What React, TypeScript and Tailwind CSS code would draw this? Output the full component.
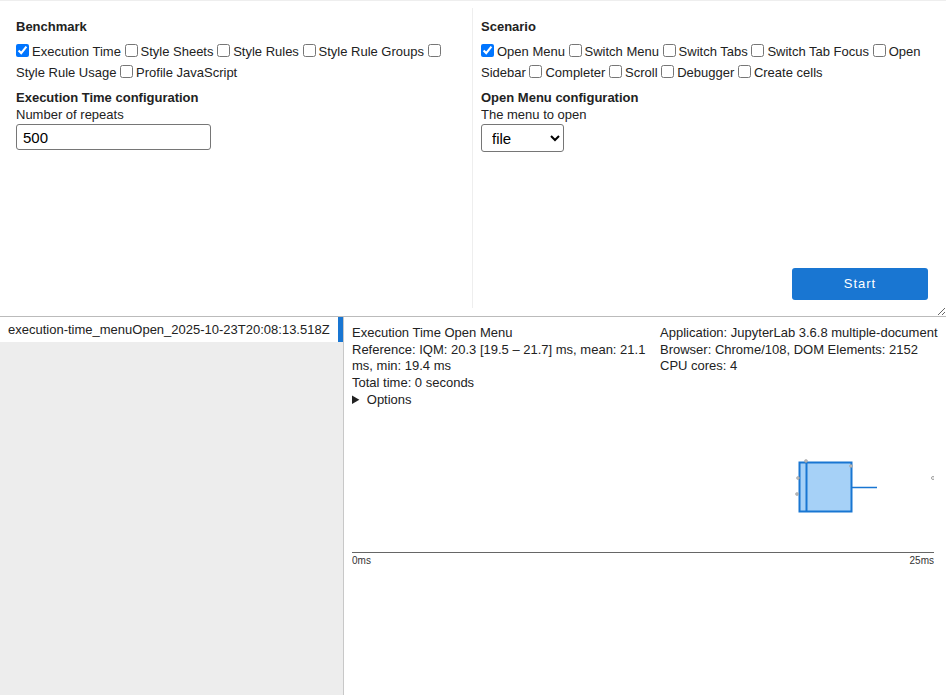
import { useState } from 'react';

const benchmarks = ['Execution Time', 'Style Sheets', 'Style Rules', 'Style Rule Groups', 'Style Rule Usage', 'Profile JavaScript'];
const scenarios = ['Open Menu', 'Switch Menu', 'Switch Tabs', 'Switch Tab Focus', 'Open Sidebar', 'Completer', 'Scroll', 'Debugger', 'Create cells'];

function CheckList({ items, checked }: { items: string[]; checked: string }) {
  return (
    <div className="leading-[21px]">
      {items.map((item) => (
        <span key={item}>
          <label>
            <input type="checkbox" defaultChecked={item === checked} className="m-0 mr-[3px] w-[13px] h-[13px] align-[-1px]" />
            {item}
          </label>{' '}
        </span>
      ))}
    </div>
  );
}

function BoxPlot() {
  return (
    <svg width="582" height="161" className="block">
      <rect x="447.5" y="53.5" width="52" height="49" fill="#a6d1f7" stroke="#1976d2" strokeWidth="2" />
      <line x1="454.5" y1="53" x2="454.5" y2="103" stroke="#1976d2" strokeWidth="2" />
      <line x1="500" y1="78.5" x2="525" y2="78.5" stroke="#1976d2" strokeWidth="1.5" />
      {[
        [454, 52],
        [499, 57],
        [446, 69],
        [445, 85],
      ].map(([x, y]) => (
        <circle key={`${x}-${y}`} cx={x} cy={y} r="1.5" fill="#bbb" stroke="#999" strokeWidth="0.5" />
      ))}
      <circle cx="581" cy="69" r="1.5" fill="none" stroke="#888" strokeWidth="0.8" />
      <line x1="0" y1="143.5" x2="582" y2="143.5" stroke="#666" strokeWidth="1" />
      <text x="0" y="155" fontSize="10" fill="#333" fontFamily="Liberation Sans, Arial, sans-serif">0ms</text>
      <text x="582" y="155" fontSize="10" fill="#333" textAnchor="end" fontFamily="Liberation Sans, Arial, sans-serif">25ms</text>
    </svg>
  );
}

export default function App() {
  const [repeats, setRepeats] = useState('500');

  return (
    <div className="w-[946px] h-[695px] bg-white text-[#222] text-[13px] font-['Liberation_Sans',Arial,sans-serif] flex flex-col overflow-hidden">
      {/* top configuration area */}
      <div className="h-[317px] shrink-0 border-t border-[#eee] border-b border-b-[#bbb] flex p-[8px] pt-[7px] resize-y overflow-hidden">
        <div className="w-[465px] border-r border-[#eee] px-[8px] pt-[8px]">
          <h3 className="font-bold leading-[21px] mb-[4px]">Benchmark</h3>
          <CheckList items={benchmarks} checked="Execution Time" />
          <h3 className="font-bold leading-[16px] mt-[7px]">Execution Time configuration</h3>
          <div className="leading-[16px] mt-[1px]">Number of repeats</div>
          <input
            value={repeats}
            onChange={(e) => setRepeats(e.target.value)}
            className="mt-[1px] w-[195px] h-[26px] border border-[#767676] rounded-[3px] px-[6px] text-[15px] text-black outline-none"
          />
        </div>
        <div className="flex-1 px-[8px] pt-[8px] pb-[8px] flex flex-col">
          <h3 className="font-bold leading-[21px] mb-[4px]">Scenario</h3>
          <CheckList items={scenarios} checked="Open Menu" />
          <h3 className="font-bold leading-[16px] mt-[7px]">Open Menu configuration</h3>
          <div className="leading-[16px] mt-[1px]">The menu to open</div>
          <select defaultValue="file" className="mt-[1px] w-[83px] h-[28px] border border-[#767676] rounded-[3px] pl-[6px] text-[15px] text-black bg-white">
            <option value="file">file</option>
            <option value="edit">edit</option>
            <option value="view">view</option>
          </select>
          <div className="flex-1" />
          <div className="flex justify-end pr-[2px]">
            <button className="w-[136px] h-[32px] bg-[#1976d2] text-white rounded-[3px] tracking-[1px] text-[13px] font-medium">
              Start
            </button>
          </div>
        </div>
      </div>

      {/* results area */}
      <div className="flex flex-1 min-h-0">
        <div className="w-[344px] shrink-0 bg-[#ededed] border-r border-[#c8c8c8]">
          <div className="h-[25px] bg-white flex items-center pl-[8px] border-r-[5px] border-[#1976d2] whitespace-nowrap">
            execution-time_menuOpen_2025-10-23T20:08:13.518Z
          </div>
        </div>
        <div className="flex-1 px-[8px] pt-[8px]">
          <div className="flex gap-[8px] leading-[16.6px]">
            <div className="w-[300px]">
              <div>Execution Time Open Menu</div>
              <div>Reference: IQM: 20.3 [19.5 – 21.7] ms, mean: 21.1 ms, min: 19.4 ms</div>
              <div>Total time: 0 seconds</div>
              <details className="mt-[1px]">
                <summary className="cursor-pointer">
                  <span className="ml-[1px]">Options</span>
                </summary>
              </details>
            </div>
            <div className="flex-1 whitespace-nowrap">
              <div>Application: JupyterLab 3.6.8 multiple-document</div>
              <div>Browser: Chrome/108, DOM Elements: 2152</div>
              <div>CPU cores: 4</div>
            </div>
          </div>
          <BoxPlot />
        </div>
      </div>
    </div>
  );
}
